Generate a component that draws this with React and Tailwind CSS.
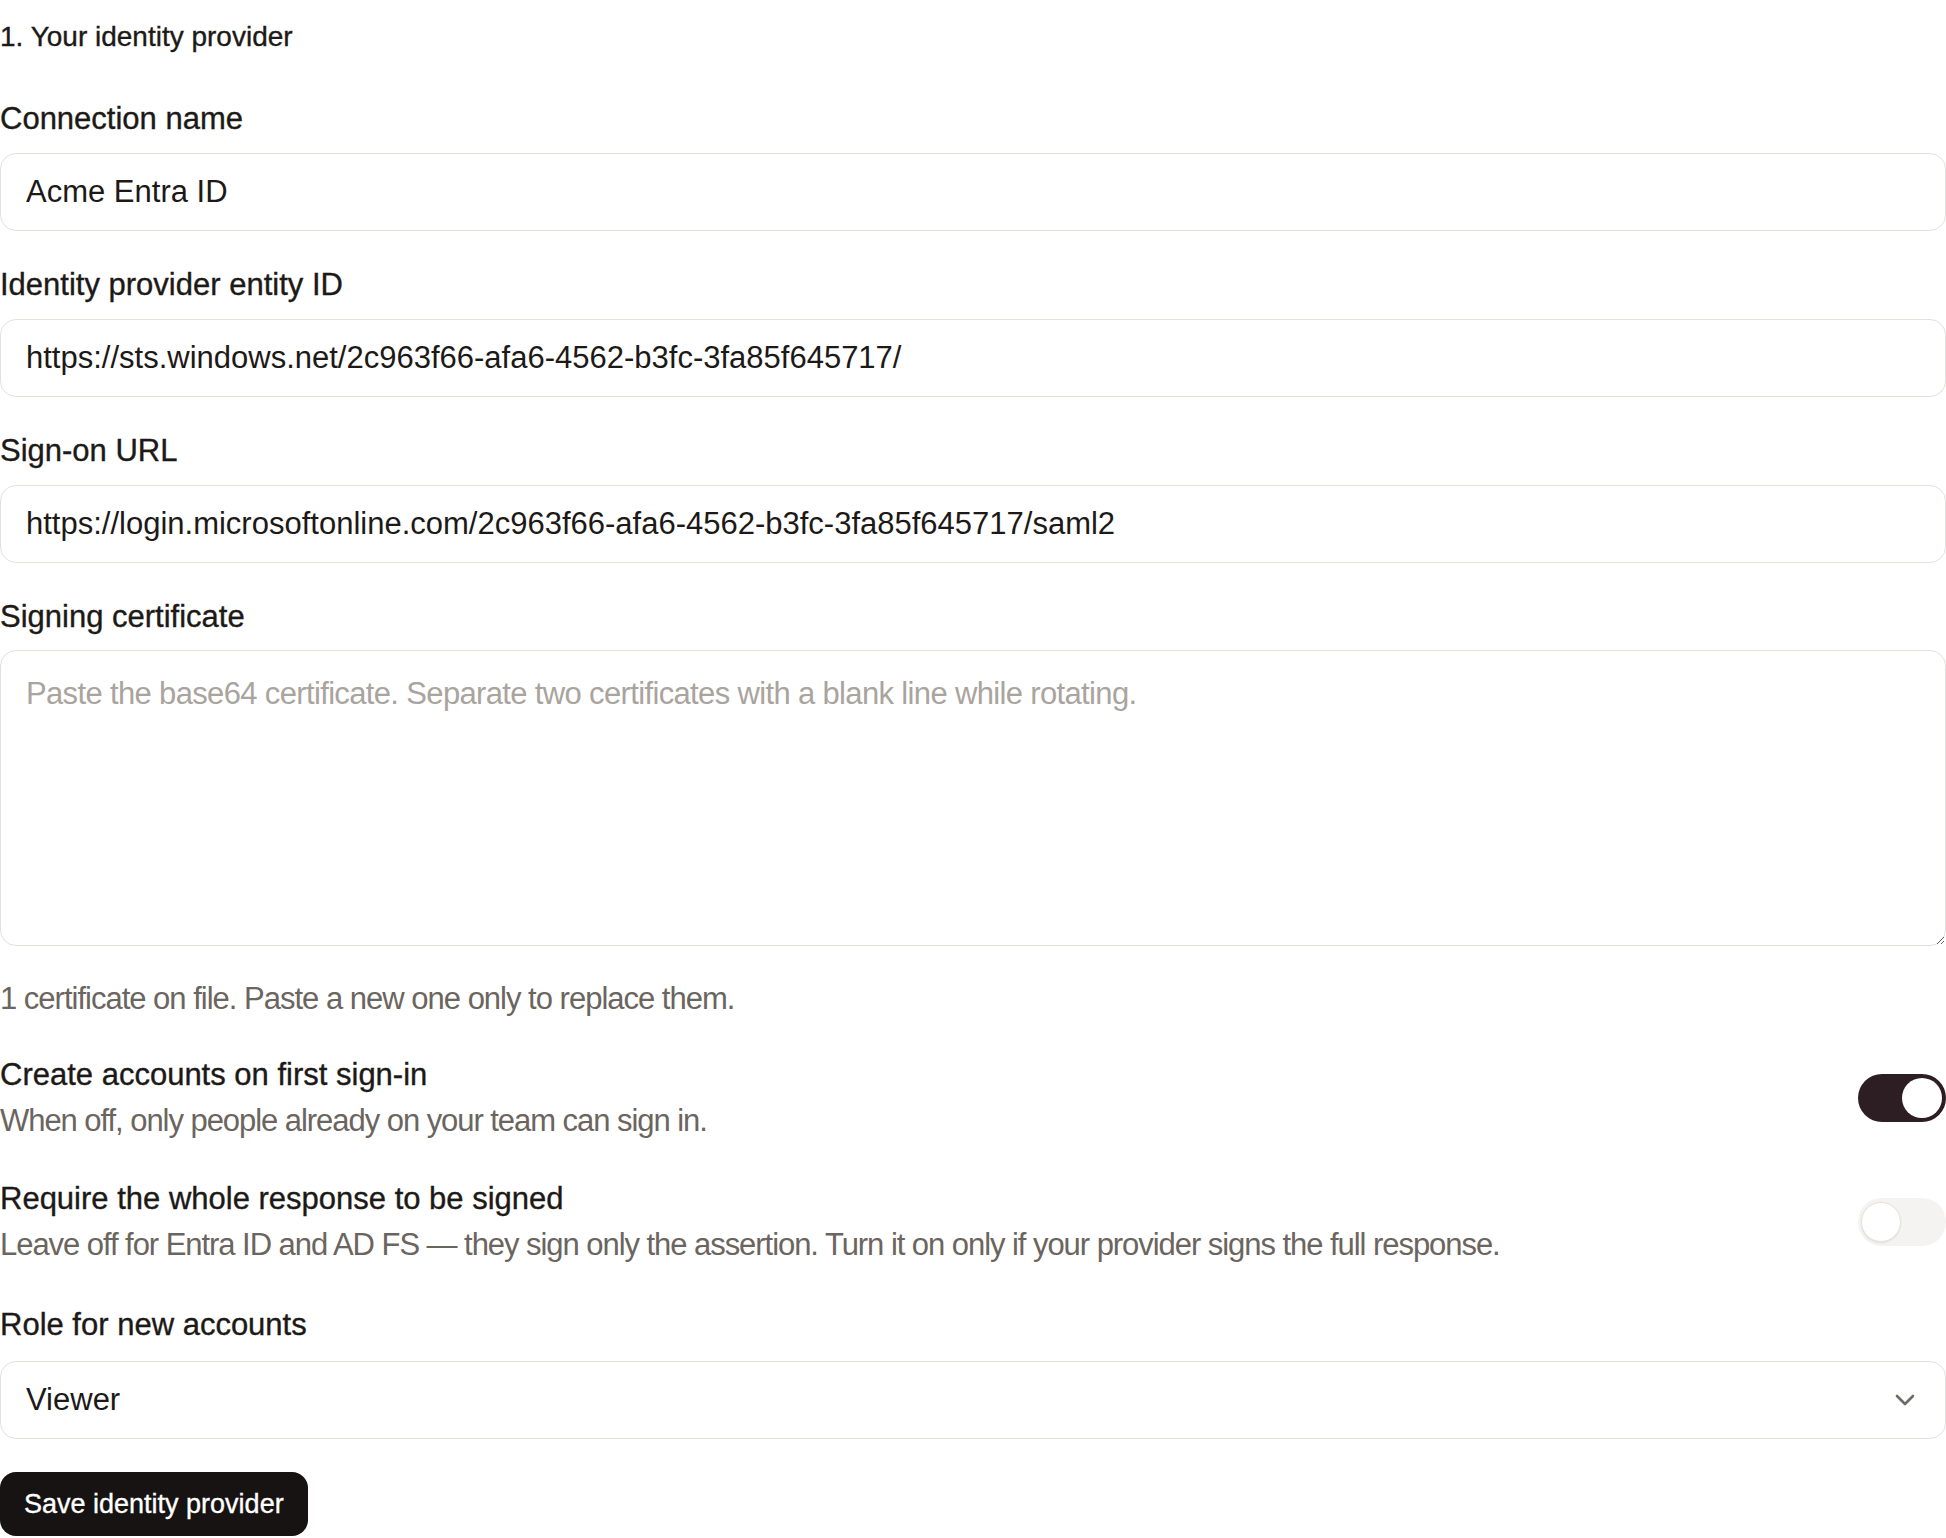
import { useState } from "react";

const field =
  "block w-full h-[78px] rounded-[16px] border border-[#e4e1dd] bg-white px-[25px] text-[31px] leading-[40px] text-[#1c1917] outline-none focus:border-[#a8a29e]";

// Liberation Sans has no 500 weight, so a hairline stroke stands in for medium
const medium = "[-webkit-text-stroke:0.35px_currentColor]";

function Label({ htmlFor, children, className = "" }) {
  return (
    <label
      htmlFor={htmlFor}
      className={`block text-[31px] leading-[40px] text-[#1c1917] ${medium} ${className}`}
    >
      {children}
    </label>
  );
}

function Toggle({ checked, onChange, label }) {
  return (
    <button
      type="button"
      role="switch"
      aria-checked={checked}
      aria-label={label}
      onClick={() => onChange(!checked)}
      className={`relative shrink-0 w-[88px] h-[48px] rounded-full transition-colors ${
        checked ? "bg-[#2c1e23]" : "bg-[#f4f3f1]"
      }`}
    >
      <span
        className={`absolute top-[4px] w-[40px] h-[40px] rounded-full bg-white transition-all ${
          checked
            ? "left-[44px]"
            : "left-[3px] border border-[#e6e3df] shadow-[0_1px_2px_rgba(0,0,0,0.08)]"
        }`}
      />
    </button>
  );
}

function ToggleRow({ title, hint, checked, onChange, className = "" }) {
  return (
    <div className={`flex items-center justify-between gap-8 ${className}`}>
      <div>
        <div className={`text-[31px] leading-[40px] text-[#1c1917] ${medium}`}>{title}</div>
        <div className="mt-[6px] text-[31px] leading-[40px] tracking-[-1.05px] text-[#6b6560]">{hint}</div>
      </div>
      <Toggle checked={checked} onChange={onChange} label={title} />
    </div>
  );
}

export default function App() {
  const [name, setName] = useState("Acme Entra ID");
  const [entityId, setEntityId] = useState(
    "https://sts.windows.net/2c963f66-afa6-4562-b3fc-3fa85f645717/"
  );
  const [ssoUrl, setSsoUrl] = useState(
    "https://login.microsoftonline.com/2c963f66-afa6-4562-b3fc-3fa85f645717/saml2"
  );
  const [cert, setCert] = useState("");
  const [autoCreate, setAutoCreate] = useState(true);
  const [signedResponse, setSignedResponse] = useState(false);
  const [role, setRole] = useState("viewer");

  return (
    <div className="w-full bg-white font-['Liberation_Sans',Arial,sans-serif] text-[#1c1917] pt-[19px]">
      <form onSubmit={(e) => e.preventDefault()}>
        <h2 className={`text-[28px] leading-[36px] font-normal ${medium}`}>1. Your identity provider</h2>

        <Label htmlFor="conn-name" className="mt-[44px]">Connection name</Label>
        <input
          id="conn-name"
          className={`${field} mt-[14px]`}
          value={name}
          onChange={(e) => setName(e.target.value)}
        />

        <Label htmlFor="entity-id" className="mt-[34px]">Identity provider entity ID</Label>
        <input
          id="entity-id"
          className={`${field} mt-[14px]`}
          value={entityId}
          onChange={(e) => setEntityId(e.target.value)}
        />

        <Label htmlFor="sso-url" className="mt-[34px]">Sign-on URL</Label>
        <input
          id="sso-url"
          className={`${field} mt-[14px]`}
          value={ssoUrl}
          onChange={(e) => setSsoUrl(e.target.value)}
        />

        <Label htmlFor="cert" className="mt-[34px]">Signing certificate</Label>
        <textarea
          id="cert"
          value={cert}
          onChange={(e) => setCert(e.target.value)}
          placeholder="Paste the base64 certificate. Separate two certificates with a blank line while rotating."
          className="block w-full h-[296px] mt-[13px] rounded-[16px] border border-[#e4e1dd] bg-white px-[25px] pt-[23px] text-[31px] leading-[40px] text-[#1c1917] placeholder:text-[#a9a49e] placeholder:tracking-[-0.65px] outline-none resize-y"
        />
        <p className="mt-[33px] text-[31px] leading-[40px] tracking-[-1px] text-[#6b6560]">
          1 certificate on file. Paste a new one only to replace them.
        </p>

        <ToggleRow
          className="mt-[36px]"
          title="Create accounts on first sign-in"
          hint="When off, only people already on your team can sign in."
          checked={autoCreate}
          onChange={setAutoCreate}
        />
        <ToggleRow
          className="mt-[38px]"
          title="Require the whole response to be signed"
          hint="Leave off for Entra ID and AD FS — they sign only the assertion. Turn it on only if your provider signs the full response."
          checked={signedResponse}
          onChange={setSignedResponse}
        />

        <Label htmlFor="role" className="mt-[40px]">Role for new accounts</Label>
        <div className="relative mt-[16px]">
          <select
            id="role"
            value={role}
            onChange={(e) => setRole(e.target.value)}
            className={`${field} appearance-none pr-[70px]`}
          >
            <option value="viewer">Viewer</option>
            <option value="editor">Editor</option>
            <option value="admin">Admin</option>
          </select>
          <svg
            className="pointer-events-none absolute right-[31px] top-1/2 -translate-y-1/2"
            width="20"
            height="12"
            viewBox="0 0 20 12"
            fill="none"
          >
            <path d="M2 2l8 8 8-8" stroke="#6f6b67" strokeWidth="2.6" strokeLinecap="round" strokeLinejoin="round" />
          </svg>
        </div>

        <button
          type="submit"
          className={`mt-[33px] h-[64px] px-[24px] rounded-[16px] bg-[#161312] text-white text-[27px] ${medium}`}
        >
          Save identity provider
        </button>
      </form>
    </div>
  );
}
